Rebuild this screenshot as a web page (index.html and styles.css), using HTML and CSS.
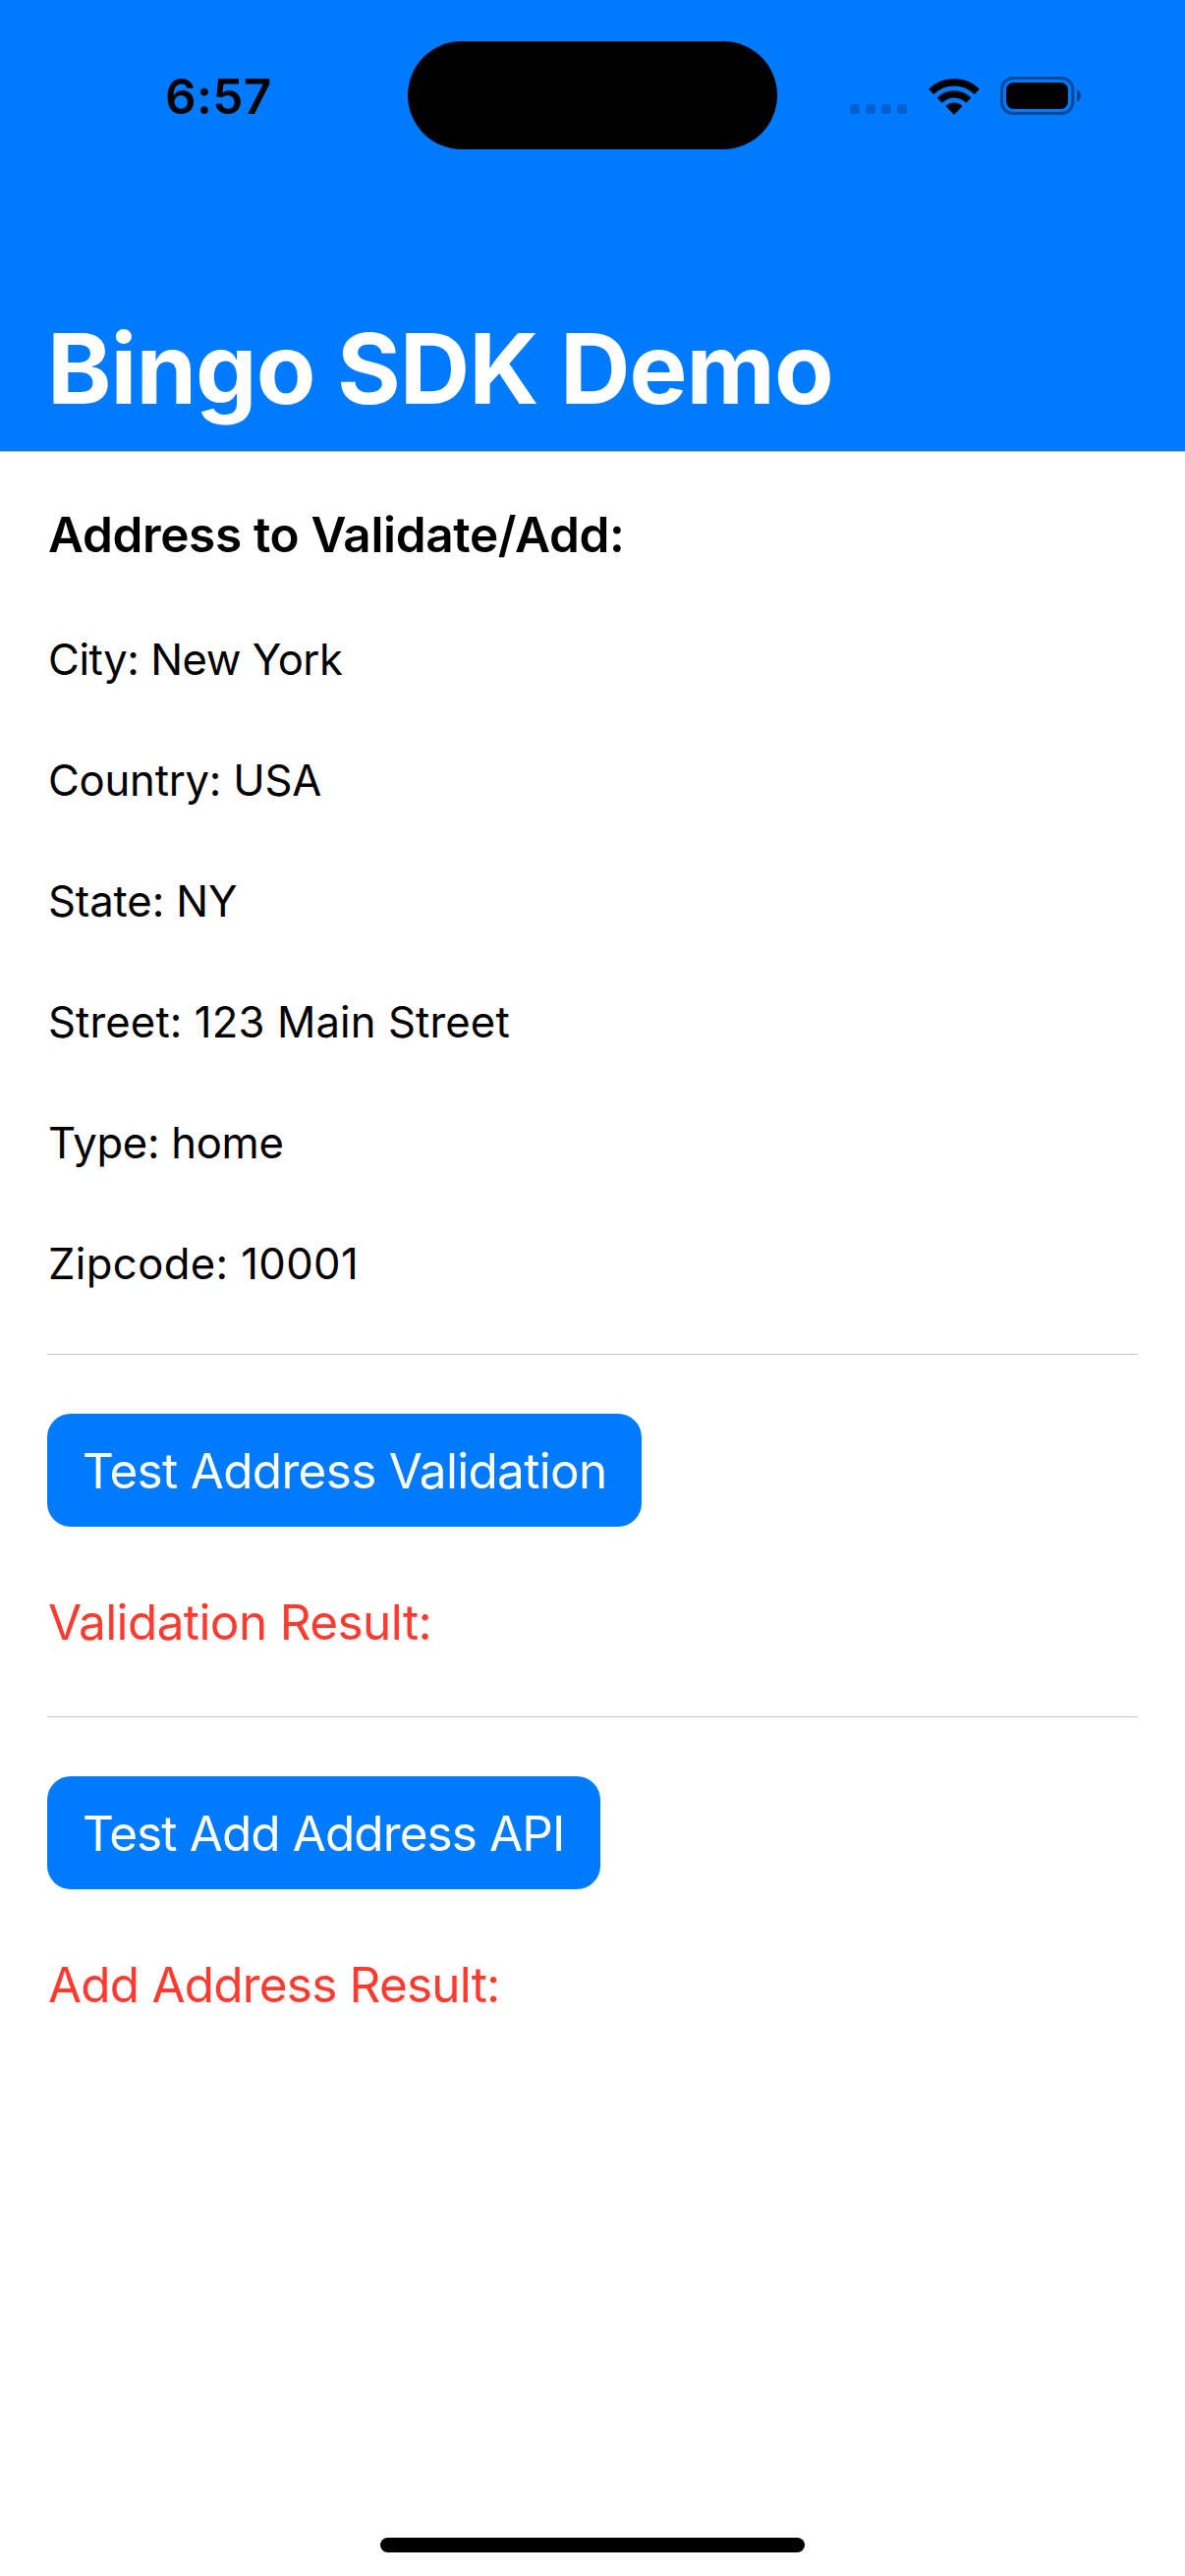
FILE: index.html
```html
<!DOCTYPE html>
<html lang="en">
<head>
<meta charset="utf-8">
<title>Bingo SDK Demo</title>
<link rel="stylesheet" href="styles.css">
</head>
<body>
<div class="screen">
  <header class="navbar">
    <div class="status-bar">
      <div class="clock">6:57</div>
      <div class="island"></div>
      <div class="indicators">
        <div class="cellular"><i></i><i></i><i></i><i></i></div>
        <svg class="wifi" width="52" height="38" viewBox="0 0 52 38">
          <g fill="#000" stroke="#000" stroke-width="1.4" stroke-linejoin="round">
            <path d="M1.1 11.7A36 36 0 0 1 50.9 11.7L46.7 16A30 30 0 0 0 5.3 16Z"/>
            <path d="M9.7 20.6A23.6 23.6 0 0 1 42.3 20.6L38.2 24.7A17.7 17.7 0 0 0 13.8 24.7Z"/>
            <path d="M18.4 29.1A11.2 11.2 0 0 1 33.6 29.1L26 36.8Z"/>
          </g>
        </svg>
        <svg class="battery" width="83" height="39" viewBox="0 0 83 39">
          <rect x="1.5" y="1.5" width="72.3" height="36" rx="11.5" fill="none" stroke="#000" stroke-opacity=".4" stroke-width="3"/>
          <rect x="6" y="6" width="63" height="27" rx="7.5" fill="#000"/>
          <path d="M78 13.5C83.3 15.7 83.3 23.3 78 25.5Z" fill="#000" fill-opacity=".45"/>
        </svg>
      </div>
    </div>
    <h1 class="title">Bingo SDK Demo</h1>
  </header>

  <main class="content">
    <section class="address">
      <h2 class="heading">Address to Validate/Add:</h2>
      <p class="field field-city">City: New York</p>
      <p class="field field-country">Country: USA</p>
      <p class="field field-state">State: NY</p>
      <p class="field field-street">Street: 123 Main Street</p>
      <p class="field field-type">Type: home</p>
      <p class="field field-zip">Zipcode: 10001</p>
    </section>
    <section class="test">
      <button class="action action-validate">Test Address Validation</button>
      <p class="result result-validate">Validation Result:</p>
    </section>
    <section class="test">
      <button class="action action-add">Test Add Address API</button>
      <p class="result result-add">Add Address Result:</p>
    </section>
  </main>

  <footer class="home-area"><div class="home-indicator"></div></footer>
</div>
</body>
</html>
```
FILE: styles.css
```css
* { box-sizing: border-box; }

body {
  margin: 0;
  background: #fff;
  color: #000;
  font-family: Inter, "Liberation Sans", sans-serif;
}

h1, h2, p { margin: 0; }

.screen {
  display: flex;
  flex-direction: column;
  width: 1206px;
  height: 2622px;
}

/* Header */
.navbar {
  display: flex;
  flex-direction: column;
  justify-content: space-between;
  height: 460px;
  padding-bottom: 24px;
  background: #007aff;
  border-bottom: 1px solid #b2b2b2;
}

.status-bar {
  display: grid;
  grid-template-columns: 415px 376px 415px;
  align-items: center;
  height: 194px;
}

.clock {
  padding: 2px 0 0 168px;
  font-size: 49.5px;
  font-weight: 600;
  line-height: 60px;
  letter-spacing: 0.37px;
}

.island {
  height: 110px;
  border-radius: 55px;
  background: #000;
}

.indicators {
  display: flex;
  align-items: center;
  padding-left: 74px;
  height: 39px;
}

.cellular {
  display: flex;
  gap: 6px;
  margin: 28px 21px 0 0;
}

.cellular i {
  width: 10px;
  height: 10px;
  border-radius: 3px;
  background: rgba(0, 0, 0, 0.2);
}

.cellular, .wifi { align-self: flex-start; }
.wifi { flex: none; margin: 1px 21.5px 0 0.5px; }
.battery { flex: none; }

.title {
  padding-left: 48px;
  color: #fff;
  font-size: 99px;
  font-weight: 700;
  line-height: 120px;
  letter-spacing: -0.96px;
}

/* Content */
.content {
  flex: 1;
  padding: 54px 48px 0;
}

.address {
  display: flex;
  flex-direction: column;
  gap: 69px;
  padding-bottom: 64px;
}

.heading {
  margin-bottom: 2px;
  padding-left: 1px;
  font-size: 49.5px;
  font-weight: 600;
  line-height: 60px;
  letter-spacing: -0.35px;
}

.field {
  padding-left: 1px;
  font-size: 43.6px;
  line-height: 54px;
}

.field-city { letter-spacing: -0.44px; }
.field-country { letter-spacing: -0.22px; }
.field-state { letter-spacing: -0.1px; }
.field-street { letter-spacing: 0.13px; }
.field-type { letter-spacing: -0.27px; }
.field-zip { letter-spacing: 0.39px; }

.test {
  display: flex;
  flex-direction: column;
  align-items: flex-start;
  gap: 67px;
  padding: 60px 0 66px;
  border-top: 1px solid #c6c6c8;
}

.action {
  height: 115px;
  padding: 0 0 0 36px;
  border: 0;
  border-radius: 24px;
  background: #007aff;
  color: #fff;
  font: 400 49.5px/60px Inter, "Liberation Sans", sans-serif;
  text-align: left;
  white-space: nowrap;
}

.action-validate { width: 605px; letter-spacing: -0.69px; }
.action-add { width: 563px; letter-spacing: -0.91px; }

.result {
  padding-left: 1px;
  color: #ff3b30;
  font-size: 49.5px;
  line-height: 60px;
}

.result-validate { letter-spacing: -0.61px; }
.result-add { letter-spacing: -0.81px; }

/* Home indicator */
.home-area {
  display: flex;
  justify-content: center;
  padding-bottom: 24px;
}

.home-indicator {
  width: 432px;
  height: 15px;
  border-radius: 8px;
  background: #000;
}
```
